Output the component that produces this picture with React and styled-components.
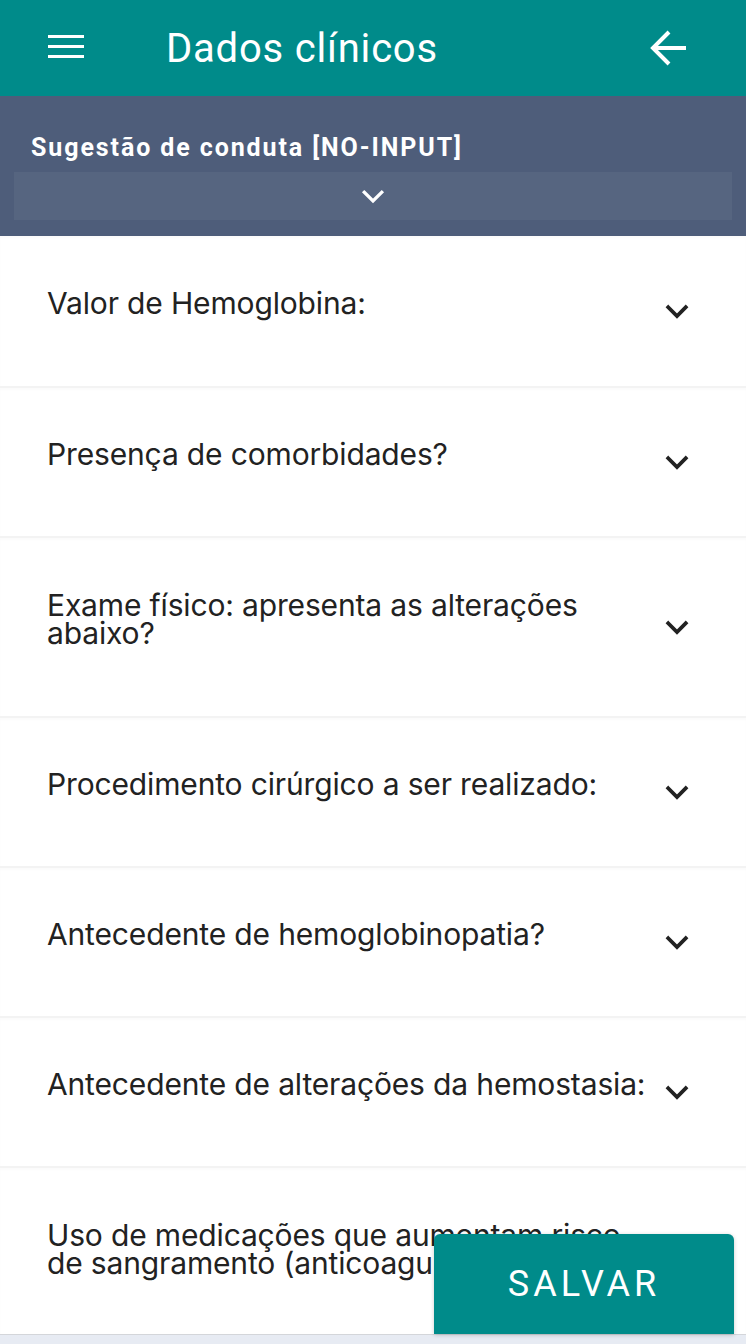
import React from 'react';
import styled, { createGlobalStyle } from 'styled-components';

const GlobalStyle = createGlobalStyle`
  html, body {
    margin: 0;
    padding: 0;
    background: #e7ebf3;
  }
  body {
    font-family: Inter, "Noto Sans", sans-serif;
  }
`;

const questions = [
  { text: 'Valor de Hemoglobina:' },
  { text: 'Presença de comorbidades?' },
  { text: 'Exame físico: apresenta as alterações abaixo?', tall: true },
  { text: 'Procedimento cirúrgico a ser realizado:' },
  { text: 'Antecedente de hemoglobinopatia?' },
  { text: 'Antecedente de alterações da hemostasia:' },
  { text: 'Uso de medicações que aumentam risco de sangramento (anticoagulantes)?', tall: true },
];

const Chevron = ({ color = '#222', size = 30, width = 3 }) => (
  <svg width={size} height={size} viewBox="0 0 24 24" fill="none">
    <path d="M5 9l7 7 7-7" stroke={color} strokeWidth={width} strokeLinecap="square" />
  </svg>
);

const App = () => {
  return (
    <Screen>
      <GlobalStyle />
      <TopBar>
        <MenuButton>
          <svg width="36" height="24" viewBox="0 0 36 24">
            <rect x="0" y="0" width="36" height="3" fill="#fff" />
            <rect x="0" y="10" width="36" height="3" fill="#fff" />
            <rect x="0" y="20" width="36" height="3" fill="#fff" />
          </svg>
        </MenuButton>
        <Title>Dados clínicos</Title>
        <BackButton>
          <svg width="38" height="38" viewBox="0 0 38 38" fill="none">
            <path d="M36 19H4M19 3L3 19l16 16" stroke="#fff" strokeWidth="4" />
          </svg>
        </BackButton>
      </TopBar>

      <Suggestion>
        <SuggestionTitle>Sugestão de conduta [NO-INPUT]</SuggestionTitle>
        <SuggestionToggle>
          <Chevron color="#fff" size={30} width={2.6} />
        </SuggestionToggle>
      </Suggestion>

      <List>
        {questions.map((q) => (
          <Row key={q.text} $tall={q.tall}>
            <Question>{q.text}</Question>
            <Chevron />
          </Row>
        ))}
      </List>

      <BottomStrip />

      <SaveButton>SALVAR</SaveButton>
    </Screen>
  );
};

const Screen = styled.div`
  position: relative;
  width: 746px;
  height: 1344px;
  overflow: hidden;
  display: flex;
  flex-direction: column;
  background: #e7ebf3;
`;

const TopBar = styled.header`
  flex: none;
  height: 96px;
  background: #008b8a;
  display: flex;
  align-items: center;
  padding: 0 58px 0 48px;
  box-sizing: border-box;
`;

const MenuButton = styled.div`
  display: flex;
  width: 36px;
  height: 24px;
  margin-top: -2px;
`;

const Title = styled.h1`
  flex: 1;
  margin: 0 0 0 82px;
  font-family: Roboto, "Liberation Sans", sans-serif;
  font-weight: 400;
  font-size: 40px;
  color: #fff;
  letter-spacing: 0.8px;
`;

const BackButton = styled.div`
  display: flex;
  margin-top: -1px;
`;

const Suggestion = styled.section`
  flex: none;
  background: #4e5d7a;
  padding: 36px 14px 16px;
`;

const SuggestionTitle = styled.h2`
  margin: 0 0 8px 17px;
  font-family: Roboto, "Liberation Sans", sans-serif;
  font-weight: 700;
  font-size: 25px;
  line-height: 32px;
  letter-spacing: 1.9px;
  color: #fff;
`;

const SuggestionToggle = styled.div`
  height: 48px;
  background: #566580;
  display: flex;
  align-items: center;
  justify-content: center;
`;

const List = styled.div`
  flex: 1;
  min-height: 0;
  overflow: hidden;
  background: #fff;
`;

const Row = styled.div`
  height: ${(p) => (p.$tall ? 180 : 150)}px;
  box-sizing: border-box;
  display: flex;
  align-items: center;
  padding: 0 54px 0 47px;
  background: #fff;
  border-top: 2px solid #f3f3f3;
  box-shadow: inset 0 2px 2px rgba(0, 0, 0, 0.02);
  &:first-child {
    border-top: none;
  }
`;

const Question = styled.p`
  flex: 1;
  margin: 0 10px 16px 0;
  font-size: 30px;
  line-height: 28px;
  color: #222;
  letter-spacing: -0.15px;
`;

const BottomStrip = styled.div`
  flex: none;
  height: 10px;
  background: #e7ebf3;
  border-top: 1px solid #d4d6da;
  box-sizing: border-box;
`;

const SaveButton = styled.button`
  position: absolute;
  right: 12px;
  bottom: 10px;
  width: 300px;
  height: 100px;
  border: none;
  border-radius: 6px 6px 0 0;
  background: #008b8a;
  color: #fff;
  font-family: Roboto, "Liberation Sans", sans-serif;
  font-size: 36px;
  letter-spacing: 4px;
  box-shadow: 0 1px 4px rgba(0, 0, 0, 0.2);
`;

export default App;
